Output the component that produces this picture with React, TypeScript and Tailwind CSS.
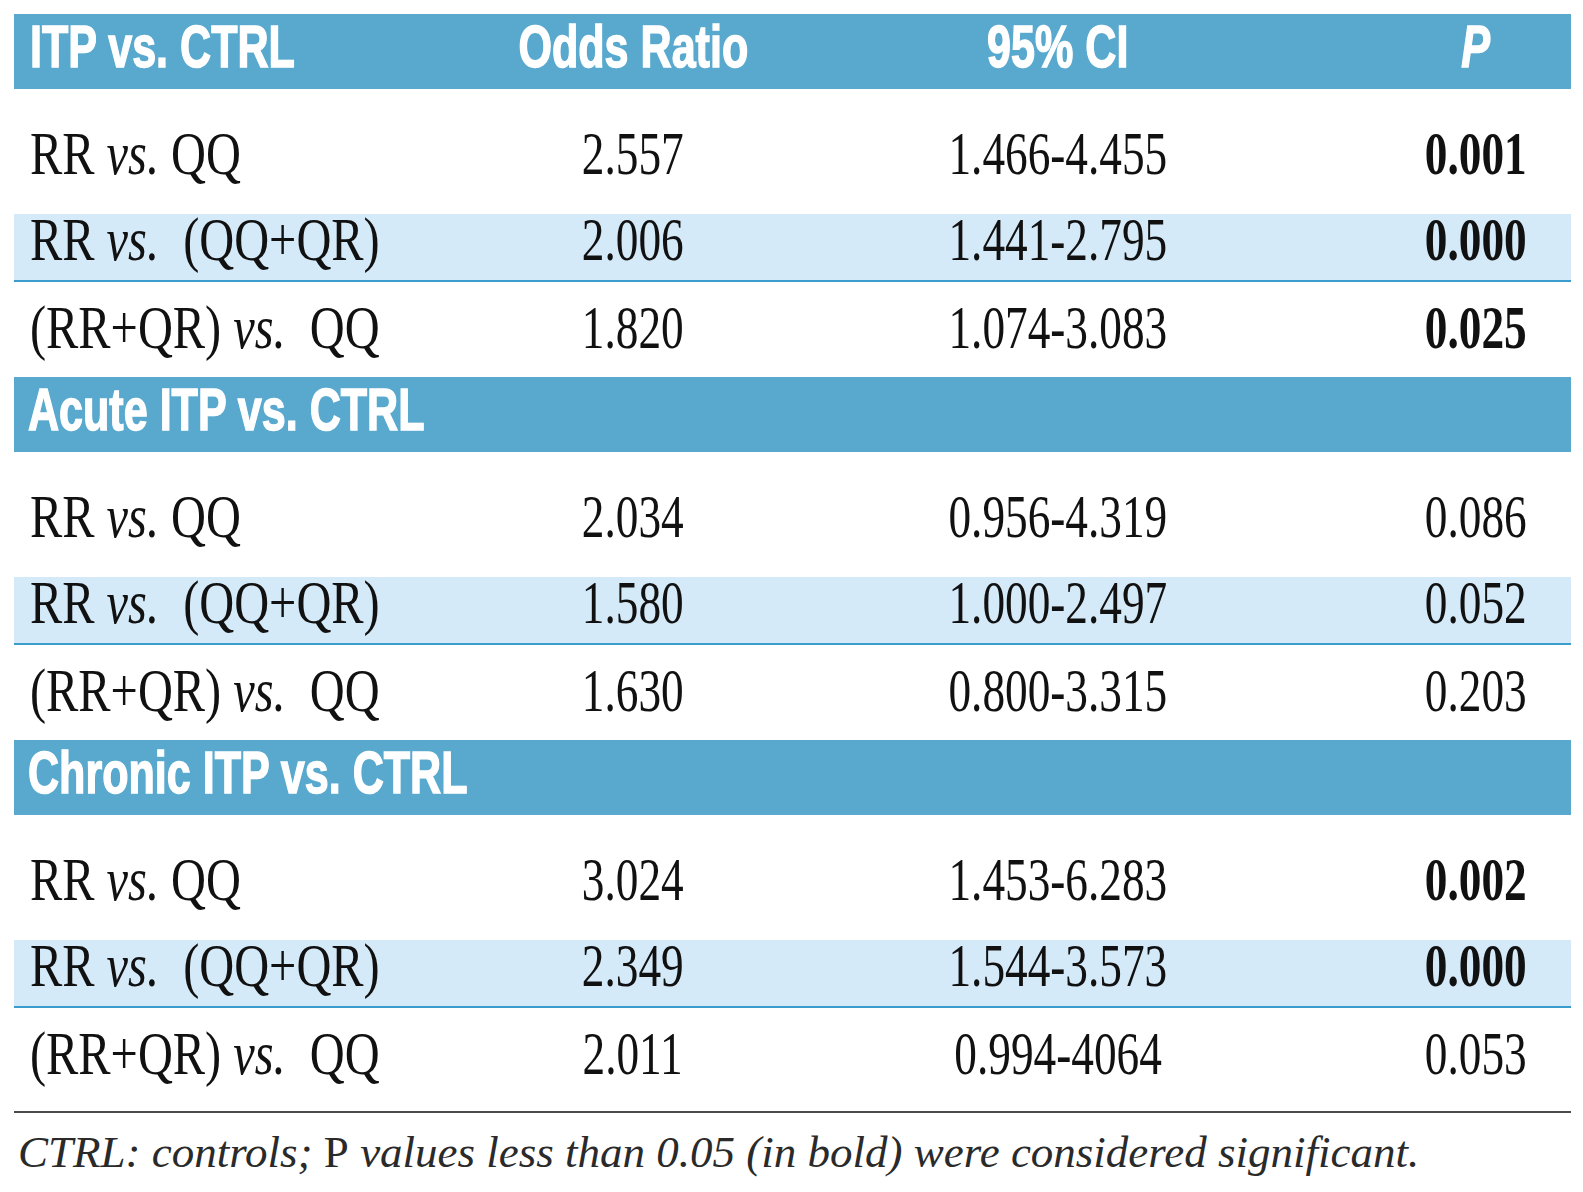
import React from "react";

const HEAD_TXT =
  "inline-block whitespace-nowrap scale-x-[0.73] font-['Liberation_Sans',Arial,sans-serif] font-bold text-[59px] leading-[59px] text-white [-webkit-text-stroke:1.5px_white]";
const BODY_TXT =
  "inline-block whitespace-nowrap scale-x-[0.73] font-['Liberation_Serif','Times_New_Roman',serif] text-[62px] leading-[50px] text-[#111]";
const LABEL_TXT =
  "inline-block whitespace-nowrap scale-x-[0.78] origin-left font-['Liberation_Serif','Times_New_Roman',serif] text-[62px] leading-[50px] text-[#111]";

type Row = { label: React.ReactNode; or: string; ci: string; p: string; bold: boolean };

const vs = <span className="italic">vs.</span>;

const labels = {
  a: (
    <>
      RR {vs} QQ
    </>
  ),
  b: (
    <>
      RR {vs}&nbsp; (QQ+QR)
    </>
  ),
  c: (
    <>
      (RR+QR) {vs}&nbsp;&nbsp;QQ
    </>
  ),
};

const sections: { title: string; rows: Row[]; top?: boolean }[] = [
  {
    title: "ITP vs. CTRL",
    top: true,
    rows: [
      { label: labels.a, or: "2.557", ci: "1.466-4.455", p: "0.001", bold: true },
      { label: labels.b, or: "2.006", ci: "1.441-2.795", p: "0.000", bold: true },
      { label: labels.c, or: "1.820", ci: "1.074-3.083", p: "0.025", bold: true },
    ],
  },
  {
    title: "Acute ITP vs. CTRL",
    rows: [
      { label: labels.a, or: "2.034", ci: "0.956-4.319", p: "0.086", bold: false },
      { label: labels.b, or: "1.580", ci: "1.000-2.497", p: "0.052", bold: false },
      { label: labels.c, or: "1.630", ci: "0.800-3.315", p: "0.203", bold: false },
    ],
  },
  {
    title: "Chronic ITP vs. CTRL",
    rows: [
      { label: labels.a, or: "3.024", ci: "1.453-6.283", p: "0.002", bold: true },
      { label: labels.b, or: "2.349", ci: "1.544-3.573", p: "0.000", bold: true },
      { label: labels.c, or: "2.011", ci: "0.994-4064", p: "0.053", bold: false },
    ],
  },
];

function Cells({ r }: { r: Row }) {
  return (
    <>
      <div className="pl-[16px]">
        <span className={LABEL_TXT}>{r.label}</span>
      </div>
      <div className="text-center">
        <span className={`${BODY_TXT} origin-center`}>{r.or}</span>
      </div>
      <div className="text-center">
        <span className={`${BODY_TXT} origin-center`}>{r.ci}</span>
      </div>
      <div className="pl-[98px] text-center">
        <span className={`${BODY_TXT} origin-center ${r.bold ? "font-bold" : ""}`}>{r.p}</span>
      </div>
    </>
  );
}

function Section({ s, last }: { s: (typeof sections)[number]; last: boolean }) {
  return (
    <div>
      {s.top ? (
        <div className="grid h-[75px] grid-cols-[419px_400px_450px_288px] items-center bg-[#59a9cf] pb-[9px]">
          <div className="pl-[16px]">
            <span className={`${HEAD_TXT} origin-left`}>ITP vs. CTRL</span>
          </div>
          <div className="text-center">
            <span className={`${HEAD_TXT} origin-center`}>Odds Ratio</span>
          </div>
          <div className="text-center">
            <span className={`${HEAD_TXT} origin-center`}>95% CI</span>
          </div>
          <div className="pl-[98px] text-center">
            <span className={`${HEAD_TXT} origin-center italic`}>P</span>
          </div>
        </div>
      ) : (
        <div className="flex h-[75px] items-center bg-[#59a9cf] pb-[9px] pl-[14px]">
          <span className={`${HEAD_TXT} origin-left`}>{s.title}</span>
        </div>
      )}
      <div className="grid h-[125px] grid-cols-[419px_400px_450px_288px] content-start pt-[39px]">
        <Cells r={s.rows[0]} />
      </div>
      <div className="grid h-[68px] grid-cols-[419px_400px_450px_288px] content-start border-b-2 border-[#3a9dcd] bg-[#d5eaf8]">
        <Cells r={s.rows[1]} />
      </div>
      <div
        className={`grid grid-cols-[419px_400px_450px_288px] content-start pt-[20px] ${
          last ? "h-[103px]" : "h-[95px]"
        }`}
      >
        <Cells r={s.rows[2]} />
      </div>
    </div>
  );
}

export default function App() {
  return (
    <div className="min-h-[1192px] w-[1583px] bg-white pl-[14px] pt-[14px]">
      <div className="w-[1557px]">
        {sections.map((s, i) => (
          <Section key={i} s={s} last={i === sections.length - 1} />
        ))}
        <div className="h-[2px] bg-[#4a4a4a]" />
        <p className="mt-[17px] whitespace-nowrap pl-[4px] font-['Liberation_Serif','Times_New_Roman',serif] text-[45px] italic leading-[45px] text-[#2a2a2a]">
          CTRL: controls; <span className="not-italic">P</span> values less than 0.05 (in bold) were considered significant.
        </p>
      </div>
    </div>
  );
}
